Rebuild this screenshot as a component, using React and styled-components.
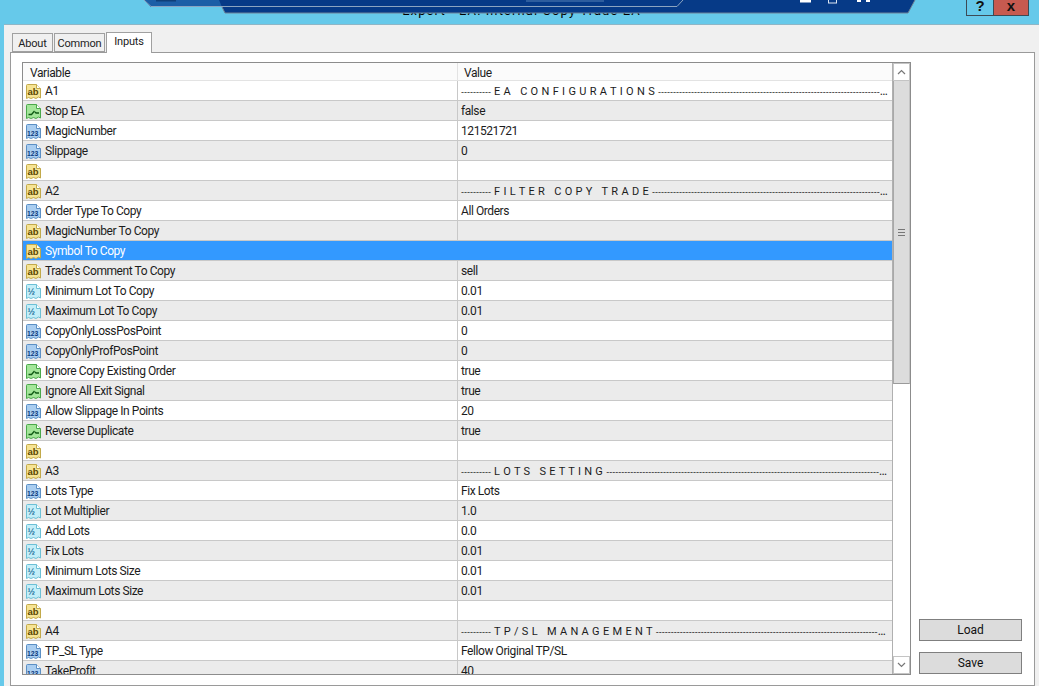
import React from 'react';
import styled, { createGlobalStyle } from 'styled-components';

const Global = createGlobalStyle`
  html, body { margin: 0; padding: 0; height: 686px; overflow: hidden; background: #66c9ea; }
  * { box-sizing: border-box; }
  body { font-family: Roboto, "Liberation Sans", Arial, sans-serif; font-size: 12px; letter-spacing: -0.42px; color: #1c1c1c; }
`;

const Page = styled.div`
  width: 1039px; height: 686px; display: flex; flex-direction: column; overflow: hidden; background: #66c9ea;
`;
const TitleBar = styled.header`
  position: relative; height: 24px; flex: none;
`;
const TitleText = styled.div`
  text-align: center; width: 1039px; padding-left: 4px; padding-top: 4px; font-size: 13px; letter-spacing: 1.1px; line-height: 14px; color: #000;
`;
const Banner = styled.svg`
  position: absolute; left: 0; top: 0; display: block;
`;
const WinButtons = styled.div`
  position: absolute; left: 966px; top: 0; display: flex; height: 16px;
`;
const WinButton = styled.div`
  width: ${p => p.$w}px; height: 16px; background: ${p => p.$bg}; border: 1px solid #3c4a55;
  border-top: 0; margin-left: ${p => p.$ml || 0}px; text-align: center; letter-spacing: 0; font: bold 15px/11px "Liberation Sans", sans-serif; color: #111;
`;
const Dialog = styled.div`
  flex: 1; margin-left: 4px; background: #f0f0f0; border-top: 1px solid #8fb6c6; padding: 7px 4px 0 6px; display: flex; flex-direction: column; min-height: 0;
`;
const Tabs = styled.div`
  display: flex; align-items: flex-end; height: 20px; padding-left: 2px; position: relative; z-index: 1; flex: none;
`;
const Tab = styled.div`
  height: ${p => p.$active ? 21 : 19}px; width: ${p => p.$w}px; margin-bottom: ${p => p.$active ? -1 : 0}px;
  background: ${p => p.$active ? '#fff' : '#f0f0f0'}; border: 1px solid #a0a0a0; ${p => p.$active ? 'border-bottom: 0;' : 'border-bottom: 1px solid #a0a0a0; margin-right: 1px;'}
  text-align: center; font-size: 11px; letter-spacing: -0.2px; line-height: ${p => p.$active ? 17 : 19}px; color: #222;
`;
const Pane = styled.div`
  flex: 1; min-height: 0; background: #fff; border: 1px solid #9a9a9a; display: flex; padding: 9px 12px 10px 11px; gap: 8px; height: 634px;
`;
const ListBox = styled.div`
  width: 889px; height: 613px; flex: none; border: 1px solid #8c8c8c; display: flex; overflow: hidden; background: #fff;
`;
const Grid = styled.div`
  width: 869px; flex: none; overflow: hidden;
`;
const Head = styled.div`
  display: grid; grid-template-columns: 435px 1fr; height: 18px; background: #fbfbfb; border-bottom: 1px solid #e3e3e3; font-size: 12px; line-height: 20px;
`;
const HeadCell = styled.div`
  padding-left: 6px; &:first-child { border-right: 1px solid #e3e3e3; padding-left: 7px; }
`;
const Row = styled.div`
  display: grid; grid-template-columns: 435px 1fr; height: 20px; border-bottom: 1px solid #c8c8c8;
  background: ${p => p.$sel ? '#3399ff' : p.$alt ? '#ebebeb' : '#fff'};
  color: ${p => p.$sel ? '#fff' : '#1c1c1c'};
`;
const NameCell = styled.div`
  display: flex; align-items: center; gap: 3px; padding: 1px 0 0 2px; border-right: 1px solid ${p => p.$sel ? '#3399ff' : '#c8c8c8'}; white-space: nowrap; overflow: hidden; line-height: 19px;
`;
const ValueCell = styled.div`
  padding: 1px 4px 0 3px; line-height: 19px; white-space: nowrap; overflow: hidden; text-overflow: ellipsis; width: 434px;
`;
const Dashes = styled.span`
  font-family: "Liberation Sans", Arial, sans-serif; font-size: 9px; letter-spacing: 0;
`;
const Spaced = styled.span`
  white-space: pre; letter-spacing: ${p => p.$ls}px; margin: 0 3px; font-size: 11px;
`;
const Scroll = styled.div`
  width: 18px; flex: none; display: flex; flex-direction: column; border-left: 1px solid #b0b0b0; background: #fff;
`;
const ScrollBtn = styled.div`
  height: 18px; flex: none; background: #fff; border: 1px solid #c4c4c4; display: flex; align-items: center; justify-content: center;
`;
const Thumb = styled.div`
  height: 303px; flex: none; background: #dcdcdc; border-left: 1px solid #a8a8a8; border-right: 1px solid #c4c4c4; border-bottom: 1px solid #9a9a9a; display: flex; align-items: center; justify-content: center;
`;
const Grip = styled.div`
  width: 7px; height: 7px; background: repeating-linear-gradient(#777 0 1px, #dcdcdc 1px 3px);
`;
const Track = styled.div` flex: 1; `;
const Side = styled.div`
  flex: 1; display: flex; flex-direction: column; justify-content: flex-end; gap: 11px; padding-bottom: 1px;
`;
const ActionBtn = styled.div`
  height: 22px; background: #dcdcdc; border: 1px solid #7f7f7f; text-align: center; font-size: 12px; letter-spacing: 0; line-height: 21px; color: #111;
`;

const palette = {
  ab: { fill: '#f6e494', edge: '#c2a94a', text: '#5a4700' },
  num: { fill: '#a9cdf0', edge: '#5b8fc4', text: '#0b3a7c' },
  dbl: { fill: '#c4eef8', edge: '#6cc0d6', text: '#1a6e9c' },
  bool: { fill: '#a4e69a', edge: '#4aa84a', text: '#0f4f0f' },
};

function TypeIcon({ kind }) {
  const c = palette[kind];
  return (
    <svg width="17" height="17" viewBox="0 0 17 17" style={{ flex: 'none' }}>
      <path d="M1.5 2.5Q1.5 1.5 2.5 1.5H11.5L15.5 5.5V15L13.5 14L11 15.5L8.5 14.5L6 15.5L3.5 14.5L1.5 15.5Z" fill={c.fill} stroke={c.edge} strokeWidth="1" />
      <path d="M11.5 1.5V5.5H15.5" fill="#fff" stroke={c.edge} strokeWidth="1" />
      {kind === 'bool' && <path d="M3.5 11.5H6.5L9.5 8M10 8.8L11 10H14" fill="none" stroke="#0f5a14" strokeWidth="1.3" />}
      {kind === 'ab' && <text x="2.4" y="12" fontFamily="Liberation Sans, sans-serif" fontSize="9.5" fontWeight="700" letterSpacing="0" fill={c.text}>ab</text>}
      {kind === 'num' && <text x="2" y="13" fontFamily="Liberation Sans, sans-serif" fontSize="6.8" fontWeight="700" letterSpacing="0" fill={c.text}>123</text>}
      {kind === 'dbl' && <text x="2.6" y="12" fontFamily="Liberation Sans, sans-serif" fontSize="9" fontWeight="700" letterSpacing="0" fill={c.text}>½</text>}
    </svg>
  );
}

function Section({ left, label, ls }) {
  return (
    <>
      <Dashes>{'-'.repeat(left)}</Dashes>
      <Spaced $ls={ls}>{label}</Spaced>
      <Dashes>{'-'.repeat(170)}</Dashes>
    </>
  );
}

const rows = [
  ['ab', 'A1', { left: 10, label: 'E A   C O N F I G U R A T I O N S', ls: 0.3 }],
  ['bool', 'Stop EA', 'false'],
  ['num', 'MagicNumber', '121521721'],
  ['num', 'Slippage', '0'],
  ['ab', '', ''],
  ['ab', 'A2', { left: 10, label: 'F I L T E R   C O P Y   T R A D E', ls: 0.3 }],
  ['num', 'Order Type To Copy', 'All Orders'],
  ['ab', 'MagicNumber To Copy', ''],
  ['ab', 'Symbol To Copy', '', true],
  ['ab', "Trade's Comment To Copy", 'sell'],
  ['dbl', 'Minimum Lot To Copy', '0.01'],
  ['dbl', 'Maximum Lot To Copy', '0.01'],
  ['num', 'CopyOnlyLossPosPoint', '0'],
  ['num', 'CopyOnlyProfPosPoint', '0'],
  ['bool', 'Ignore Copy Existing Order', 'true'],
  ['bool', 'Ignore All Exit Signal', 'true'],
  ['num', 'Allow Slippage In Points', '20'],
  ['bool', 'Reverse Duplicate', 'true'],
  ['ab', '', ''],
  ['ab', 'A3', { left: 10, label: 'L O T S   S E T T I N G', ls: 0.3 }],
  ['num', 'Lots Type', 'Fix Lots'],
  ['dbl', 'Lot Multiplier', '1.0'],
  ['dbl', 'Add Lots', '0.0'],
  ['dbl', 'Fix Lots', '0.01'],
  ['dbl', 'Minimum Lots Size', '0.01'],
  ['dbl', 'Maximum Lots Size', '0.01'],
  ['ab', '', ''],
  ['ab', 'A4', { left: 10, label: 'T P / S L   M A N A G E M E N T', ls: 0.3 }],
  ['num', 'TP_SL Type', 'Fellow Original TP/SL'],
  ['num', 'TakeProfit', '40'],
];

export default function App() {
  return (
    <Page>
      <Global />
      <TitleBar>
        <TitleText>Expert - EA: Internal Copy Trade EA</TitleText>
        <Banner width="1039" height="24" viewBox="0 0 1039 24">
          <polygon points="144,0 151,7 222,7 225,13 908,13 915,0" fill="#063a87" />
          <polygon points="144,0 151,7 222,7 219,0" fill="#1c5ea6" />
          <polyline points="144,0 151,6.5 677,6.5 683,0" fill="none" stroke="#8ba4c0" strokeWidth="1" />
          <polyline points="222,7 225,13 908,13 915,0" fill="none" stroke="#6f8296" strokeWidth="1" />
          <rect x="156" y="0" width="20" height="1.5" fill="#0f3f78" />
          <rect x="800" y="0" width="11" height="2.5" fill="#fff" />
          <rect x="828.5" y="-2" width="8" height="5" fill="none" stroke="#dce6f2" strokeWidth="1" />
          <rect x="857" y="0" width="4" height="2" fill="#fff" />
          <rect x="866" y="0" width="4" height="2" fill="#fff" />
          <rect x="526" y="0" width="78" height="2" fill="#2d5d9e" />
        </Banner>
        <WinButtons>
          <WinButton $w={28} $bg="#66c9ea">?</WinButton>
          <WinButton $w={36} $bg="#c75a50" $ml={-1}>x</WinButton>
        </WinButtons>
      </TitleBar>
      <Dialog>
        <Tabs>
          <Tab $w={41}>About</Tab>
          <Tab $w={51}>Common</Tab>
          <Tab $w={46} $active>Inputs</Tab>
        </Tabs>
        <Pane>
          <ListBox>
            <Grid>
              <Head>
                <HeadCell>Variable</HeadCell>
                <HeadCell>Value</HeadCell>
              </Head>
              {rows.map(([kind, name, value, sel], i) => (
                <Row key={i} $alt={i % 2 === 1} $sel={sel}>
                  <NameCell $sel={sel}>
                    <TypeIcon kind={kind} />
                    {name}
                  </NameCell>
                  <ValueCell>{typeof value === 'object' ? <Section {...value} /> : value}</ValueCell>
                </Row>
              ))}
            </Grid>
            <Scroll>
              <ScrollBtn>
                <svg width="9" height="6" viewBox="0 0 9 6"><path d="M1 5L4.5 1.5L8 5" fill="none" stroke="#777" strokeWidth="1.2" /></svg>
              </ScrollBtn>
              <Thumb><Grip /></Thumb>
              <Track />
              <ScrollBtn>
                <svg width="9" height="6" viewBox="0 0 9 6"><path d="M1 1L4.5 4.5L8 1" fill="none" stroke="#777" strokeWidth="1.2" /></svg>
              </ScrollBtn>
            </Scroll>
          </ListBox>
          <Side>
            <ActionBtn>Load</ActionBtn>
            <ActionBtn>Save</ActionBtn>
          </Side>
        </Pane>
      </Dialog>
    </Page>
  );
}
